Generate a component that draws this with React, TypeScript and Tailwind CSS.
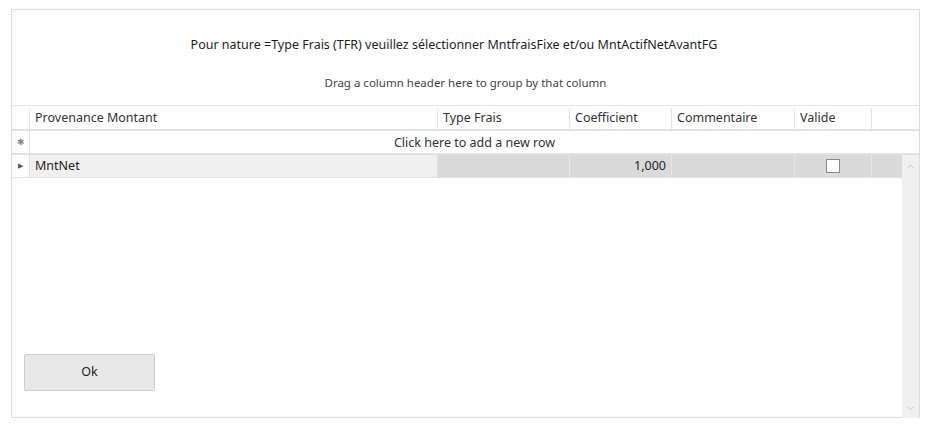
import { ChevronUp, ChevronDown } from "lucide-react";

const cols = [
  { name: "Provenance Montant", w: "w-[408px]" },
  { name: "Type Frais", w: "w-[132px]" },
  { name: "Coefficient", w: "w-[102px]" },
  { name: "Commentaire", w: "w-[123px]" },
  { name: "Valide", w: "w-[77px]" },
];

export default function App() {
  return (
    <div className="h-[439px] w-[939px] bg-white pl-[11px] pt-[9px] font-['Segoe_UI','Noto_Sans',sans-serif] text-[12.5px] text-[#1e1e1e]">
      <div className="flex h-[409px] w-[909px] flex-col border border-[#dcdcdc]">
        {/* title + group panel */}
        <div className="flex h-[95px] flex-col items-center">
          <p className="mt-[26px] pr-[23px] leading-[18px]">
            Pour nature =Type Frais (TFR) veuillez sélectionner MntfraisFixe et/ou MntActifNetAvantFG
          </p>
          <p className="mt-[21px] text-[11.5px] leading-[16px] text-[#444]">
            Drag a column header here to group by that column
          </p>
        </div>

        {/* column headers */}
        <div className="flex h-[26px] border-t border-b-2 border-[#e2e2e2] pt-[2px] text-[#333]">
          <div className="w-[18px] border-r border-[#e2e2e2]" />
          {cols.map((c) => (
            <div key={c.name} className={`${c.w} flex items-center border-r border-[#e2e2e2] pl-[5px]`}>
              {c.name}
            </div>
          ))}
          <div className="flex-1" />
        </div>

        {/* new row */}
        <div className="flex h-[24px] border-b-2 border-[#e2e2e2]">
          <div className="flex w-[18px] items-center justify-center border-r border-[#e2e2e2] text-[9px] text-[#888]">
            ✱
          </div>
          <div className="flex flex-1 items-center justify-center pt-[2px] text-[#333]">Click here to add a new row</div>
        </div>

        {/* body */}
        <div className="flex flex-1">
          <div className="flex flex-1 flex-col">
            <div className="flex h-[23px] border-b border-[#e2e2e2]">
              <div className="flex w-[18px] items-center justify-center border-r border-[#e2e2e2] text-[7px] text-[#555]">
                ▶
              </div>
              <div className="flex w-[408px] items-center border-r border-[#e2e2e2] bg-[#f0f0f0] pl-[5px] pt-[1px]">
                MntNet
              </div>
              <div className="w-[132px] border-r border-[#e6e6e6] bg-[#dadada]" />
              <div className="flex w-[102px] items-center justify-end border-r border-[#e6e6e6] bg-[#dadada] pr-[5px] pt-[1px]">
                1,000
              </div>
              <div className="w-[123px] border-r border-[#e6e6e6] bg-[#dadada]" />
              <div className="flex w-[77px] items-center justify-center border-r border-[#e6e6e6] bg-[#dadada]">
                <span className="h-[14px] w-[14px] border border-[#8a8a8a] bg-white" />
              </div>
              <div className="flex-1 bg-[#dadada]" />
            </div>
            <button className="mt-auto mb-[26px] ml-[12px] h-[37px] w-[131px] rounded-[2px] border border-[#cccccc] bg-[#e8e8e8] text-[12.5px] text-[#1e1e1e]">
              Ok
            </button>
          </div>
          <div className="-mb-px flex w-[17px] flex-col items-center justify-between bg-[#f0f0f0] pt-[6px] pb-[4px] text-[#b0b0b0]">
            <ChevronUp size={11} strokeWidth={1.5} />
            <ChevronDown size={11} strokeWidth={1.5} />
          </div>
        </div>
      </div>
    </div>
  );
}
